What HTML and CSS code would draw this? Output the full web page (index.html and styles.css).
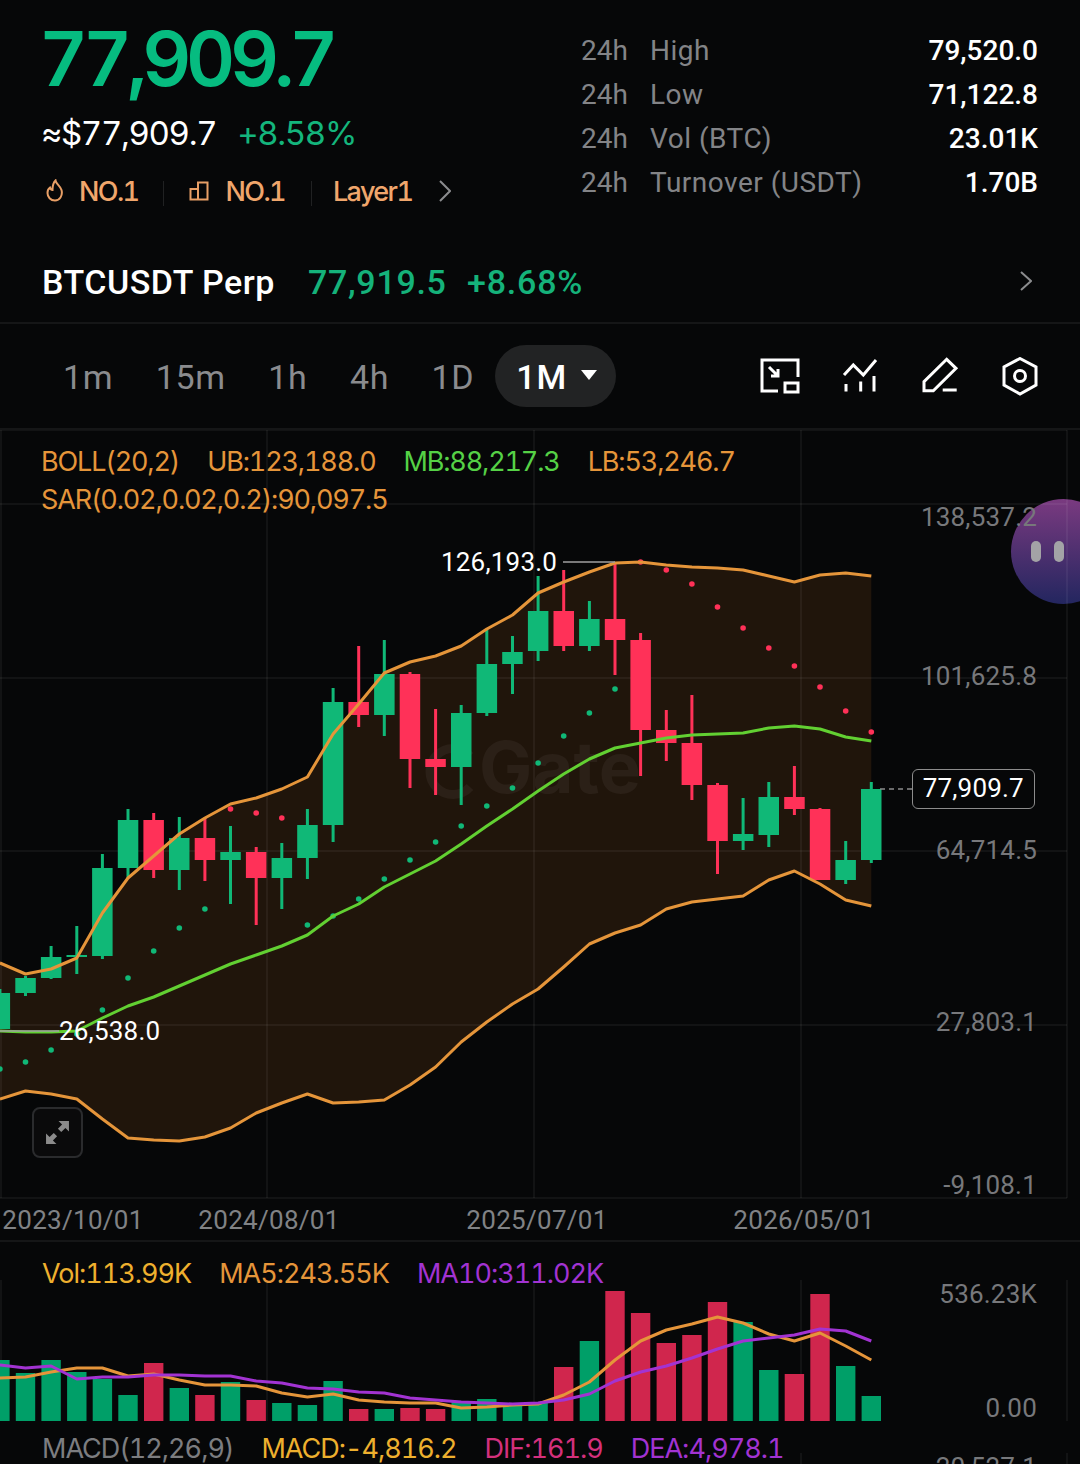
FILE: index.html
```html
<!DOCTYPE html>
<html lang="en">
<head>
    <meta charset="UTF-8">
    <meta name="viewport" content="width=device-width, initial-scale=1.0">
    <title>BTC/USDT</title>
    <link rel="stylesheet" href="styles.css">
</head>
<body>

    <!-- Floating bubble, sits under the chart texts -->
    <div class="bubble"><i></i><i></i></div>

    <!-- Price header -->
    <div class="header">
        <div class="price-block">
            <div class="last-price">77,909.7</div>
            <div class="sub-price">
                <span class="usd">≈$77,909.7</span>
                <span class="pct">+8.58%</span>
            </div>
            <div class="tags">
                <svg class="tag-icon flame" viewBox="0 0 18 24"><path d="M9.5 1.5C10 5 14 6.5 15.5 11C17 17 13.5 21.5 9 21.5C4.5 21.5 1.5 18 1.5 14C1.5 11.5 2.5 9.5 4 8.5C4.5 10 5.5 11 6.5 11C6.5 7.5 7 4 9.5 1.5Z"/></svg>
                <span class="tag tag-first">NO.1</span>
                <svg class="tag-icon bars" viewBox="0 0 20 20"><path d="M1.5 18.5V8H9V18.5ZM9 8V1.5H18.5V18.5H9"/></svg>
                <span class="tag tag-second">NO.1</span>
                <span class="tag tag-layer">Layer1</span>
                <svg class="tag-chevron" viewBox="0 0 12 22"><path d="M1 1L11 11L1 21"/></svg>
            </div>
        </div>
        <div class="stats">
            <div class="stat-row"><span class="stat-h">24h</span><span class="stat-name">High</span><span class="stat-val">79,520.0</span></div>
            <div class="stat-row"><span class="stat-h">24h</span><span class="stat-name">Low</span><span class="stat-val">71,122.8</span></div>
            <div class="stat-row"><span class="stat-h">24h</span><span class="stat-name">Vol (BTC)</span><span class="stat-val">23.01K</span></div>
            <div class="stat-row"><span class="stat-h">24h</span><span class="stat-name">Turnover (USDT)</span><span class="stat-val">1.70B</span></div>
        </div>
    </div>

    <!-- Perp row -->
    <div class="perp-row">
        <span class="perp-name">BTCUSDT Perp</span>
        <span class="perp-price">77,919.5</span>
        <span class="perp-pct">+8.68%</span>
        <svg class="perp-chevron" viewBox="0 0 12 20"><path d="M1 1L11 10L1 19"/></svg>
    </div>

    <!-- Timeframes and tools -->
    <div class="toolbar">
        <div class="tabs">
            <span class="tab">1m</span>
            <span class="tab">15m</span>
            <span class="tab">1h</span>
            <span class="tab">4h</span>
            <span class="tab">1D</span>
            <span class="tab-active">1M<i class="caret"></i></span>
        </div>
        <div class="tools">
            <svg viewBox="0 0 40 40"><path d="M38 20V3H2V34H18"/><rect x="25" y="26" width="13" height="9"/><path d="M9 10L18 19M18 12V19H11"/></svg>
            <svg viewBox="0 0 40 40"><path d="M4 18L13.3 8L23.3 18L36 3M6 27V34.5M20.7 24.5V34.5M34 19V34.5"/></svg>
            <svg viewBox="0 0 40 40"><path d="M4 33.7V24.7L26.7 2.3L36 11.3L13.3 33.7ZM22.7 33H36.7"/></svg>
            <svg viewBox="0 0 40 40"><path d="M20 1.5L36 10V28L20 37L4 28V10Z"/><circle cx="20" cy="19" r="5.5"/></svg>
        </div>
    </div>

    <!-- Main chart -->
    <div class="chart">
        <svg id="main-chart" class="plot" viewBox="0 429 1080 812"></svg>
        <div class="legend legend-boll">
            <div class="legend-line">
                <span class="c-orange">BOLL(20,2)</span>
                <span class="c-orange">UB:123,188.0</span>
                <span class="c-green">MB:88,217.3</span>
                <span class="c-orange">LB:53,246.7</span>
            </div>
            <div class="legend-line"><span class="c-orange">SAR(0.02,0.02,0.2):90,097.5</span></div>
        </div>
        <div class="last-tag">77,909.7</div>
        <div class="expand-btn">
            <svg viewBox="0 0 24 24"><path d="M13 1H23V11L19.6 7.6L15.6 11.6L12.4 8.4L16.4 4.4ZM11 23H1V13L4.4 16.4L8.4 12.4L11.6 15.6L7.6 19.6Z"/></svg>
        </div>
    </div>

    <!-- Volume and MACD -->
    <div class="lower">
        <svg id="vol-chart" class="plot" viewBox="0 1242 1080 222"></svg>
        <div class="legend legend-vol">
            <div class="legend-line">
                <span class="c-yellow">Vol:113.99K</span>
                <span class="c-orange">MA5:243.55K</span>
                <span class="c-purple">MA10:311.02K</span>
            </div>
        </div>
        <div class="legend legend-macd">
            <div class="legend-line">
                <span class="c-gray">MACD(12,26,9)</span>
                <span class="c-yellow">MACD:-4,816.2</span>
                <span class="c-pink">DIF:161.9</span>
                <span class="c-purple">DEA:4,978.1</span>
            </div>
        </div>
    </div>

    <script src="chart.js"></script>
</body>
</html>
```

FILE: styles.css
```css
* {
    box-sizing: border-box;
}
html, body {
    margin: 0;
    padding: 0;
}
body {
    position: relative;
    width: 1080px;
    height: 1464px;
    overflow: hidden;
    background: #060708;
    color: #fff;
    font-family: Roboto, "Liberation Sans", sans-serif;
}

/* header */
.header {
    display: flex;
    justify-content: space-between;
    height: 240px;
    padding: 0 42px 0 43px;
}
.last-price {
    height: 115px;
    margin-left: -4px;
    line-height: 116px;
    font-family: Inter, sans-serif;
    font-variant-numeric: tabular-nums;
    font-weight: 600;
    font-size: 76px;
    letter-spacing: -5.2px;
    color: #06bc80;
}
.sub-price {
    display: flex;
    gap: 21px;
    height: 36px;
    margin-left: -2px;
    line-height: 36px;
    font-family: Inter, sans-serif;
    font-variant-numeric: tabular-nums;
    font-size: 33px;
    letter-spacing: -1.35px;
}
.pct {
    color: #14b57c;
}
.tags {
    display: flex;
    align-items: center;
    height: 38px;
    margin-top: 21px;
    color: #f0a66c;
    font-family: Inter, sans-serif;
    font-variant-numeric: tabular-nums;
    font-weight: 500;
    font-size: 27px;
    letter-spacing: -1.6px;
}
.tag-icon {
    fill: none;
    stroke: #e89f66;
    stroke-width: 2;
}
.flame {
    width: 18px;
    height: 24px;
    margin-left: 3px;
}
.bars {
    width: 20px;
    height: 20px;
}
.tag {
    position: relative;
}
.tag-first {
    margin: 0 51px 0 15px;
}
.tag-second {
    margin: 0 48px 0 16px;
}
.tag-first::after, .tag-second::after {
    content: "";
    position: absolute;
    top: 6px;
    width: 1px;
    height: 25px;
    background: #202122;
}
.tag-first::after {
    right: -26px;
}
.tag-second::after {
    right: -27px;
}
.tag-chevron {
    width: 12px;
    height: 22px;
    margin-left: 27px;
    fill: none;
    stroke: #8b8c8e;
    stroke-width: 2;
}
.stats {
    width: 457px;
    padding-top: 29px;
    font-size: 28px;
}
.stat-row {
    display: flex;
    height: 44px;
    line-height: 44px;
}
.stat-h {
    width: 69px;
    color: #838487;
}
.stat-name {
    flex: 1;
    color: #838487;
    letter-spacing: 0.5px;
}
.stat-val {
    font-weight: 500;
}

/* perp row */
.perp-row {
    display: flex;
    align-items: center;
    height: 84px;
    padding: 2px 48px 0 42px;
    border-bottom: 2px solid #151617;
    font-size: 34px;
    font-weight: 500;
    letter-spacing: 0.5px;
}
.perp-name {
    width: 266px;
}
.perp-price {
    width: 159px;
    letter-spacing: 0.7px;
    color: #15b27a;
}
.perp-pct {
    flex: 1;
    letter-spacing: 0.8px;
    color: #15b27a;
}
.perp-chevron {
    width: 12px;
    height: 20px;
    margin-top: -3px;
    fill: none;
    stroke: #8b8c8e;
    stroke-width: 2;
}

/* toolbar */
.toolbar {
    display: flex;
    justify-content: space-between;
    align-items: center;
    height: 106px;
    padding: 0 40px 0 63px;
    border-bottom: 2px solid #151617;
}
.tabs {
    display: flex;
    align-items: center;
    gap: 42.4px;
    font-size: 34px;
    letter-spacing: 0.7px;
    color: #8a8b8e;
}
.tab {
    padding-top: 2px;
}
.tab-active {
    display: flex;
    align-items: center;
    width: 121px;
    height: 62px;
    margin-left: -21.4px;
    padding: 2px 0 0 21px;
    border-radius: 31px;
    background: #222324;
    color: #fff;
    font-weight: 500;
}
.caret {
    width: 0;
    height: 0;
    margin: 0 0 4px 14px;
    border-left: 8px solid transparent;
    border-right: 8px solid transparent;
    border-top: 10px solid #fff;
}
.tools {
    display: flex;
    gap: 40px;
    margin-top: 2px;
}
.tools svg {
    width: 40px;
    height: 40px;
    fill: none;
    stroke: #fff;
    stroke-width: 3;
}

/* charts */
.chart {
    position: relative;
    height: 812px;
    border-bottom: 2px solid #151617;
}
.lower {
    position: relative;
    height: 222px;
}
.plot {
    position: absolute;
    top: 0;
    left: 0;
    width: 1080px;
}
.chart .plot {
    height: 812px;
}
.lower .plot {
    height: 222px;
}
.grid {
    stroke: rgba(255, 255, 255, 0.07);
    stroke-width: 1.5;
}
.axis-label {
    font-family: Roboto, sans-serif;
    font-size: 26px;
    fill: #77787b;
    letter-spacing: 0.2px;
}
.date-label {
    font-family: Roboto, sans-serif;
    font-size: 26px;
    fill: #808285;
    letter-spacing: 0.3px;
    text-anchor: middle;
}
.extreme-label {
    font-family: Roboto, sans-serif;
    font-size: 26px;
    fill: #fff;
    letter-spacing: 0.2px;
}
.extreme-line {
    stroke: #a0a0a0;
    stroke-width: 1.5;
}
.watermark {
    font-family: Inter, sans-serif;
    font-weight: 700;
    font-size: 71px;
    fill: #2b2017;
}
.legend {
    position: absolute;
    left: 41px;
    font-family: Inter, sans-serif;
    font-variant-numeric: tabular-nums;
    font-size: 27px;
    letter-spacing: -1.15px;
}
.legend-boll {
    top: 13px;
}
.legend-vol {
    top: 13px;
    left: 42px;
    letter-spacing: -1px;
}
.legend-macd {
    top: 188px;
    left: 42px;
    letter-spacing: -1px;
}
.legend-line {
    display: flex;
    gap: 28px;
    height: 38px;
    line-height: 38px;
    white-space: nowrap;
}
.c-orange {
    color: #e5953a;
}
.c-green {
    color: #55d146;
}
.c-yellow {
    color: #eeb02e;
}
.c-purple {
    color: #a233d2;
}
.c-pink {
    color: #d3307c;
}
.c-gray {
    color: #7c7d80;
}
.last-tag {
    position: absolute;
    top: 338.5px;
    left: 912px;
    width: 122.5px;
    height: 40px;
    border: 1.5px solid #8c8c8c;
    border-radius: 6px;
    background: #060708;
    text-align: center;
    line-height: 37px;
    font-size: 26px;
    letter-spacing: 0.2px;
}
.expand-btn {
    display: flex;
    justify-content: center;
    align-items: center;
    position: absolute;
    top: 677px;
    left: 32px;
    width: 51px;
    height: 51px;
    border: 2px solid #2a2b2d;
    border-radius: 8px;
    background: #0a0a0b;
}
.expand-btn svg {
    width: 25px;
    height: 25px;
    fill: #8b8b8b;
}
.bubble {
    position: absolute;
    top: 499px;
    left: 1011px;
    width: 105px;
    height: 105px;
    display: flex;
    align-items: center;
    gap: 13px;
    padding-left: 20px;
    border-radius: 50%;
    background: linear-gradient(#7a3a80, #23265f);
}
.bubble i {
    width: 10px;
    height: 21px;
    border-radius: 5px;
    background: #a3a3a6;
}
```

FILE: chart.js
```js
// all y values are page pixels, the svg viewBox keeps them as they are
const count = 35;
const step = 25.63;
const lastX = 871.3;
const xAt = i => lastX - step * (count - 1 - i);

// wick top, body top, body bottom, wick bottom, colour
const candles = [
    [988, 992, 1028, 1028, 'g'], [975, 977, 992, 995, 'g'], [945, 956, 977, 978, 'g'],
    [925, 954, 956, 973, 'g'], [853, 867, 955, 958, 'g'], [808, 819, 867, 877, 'g'],
    [812, 819, 869, 877, 'r'], [816, 837, 869, 889, 'g'], [817, 837, 859, 880, 'r'],
    [825, 851, 859, 903, 'g'], [846, 851, 877, 924, 'r'], [842, 857, 877, 908, 'g'],
    [808, 824, 857, 878, 'g'], [687, 701, 824, 841, 'g'], [645, 701, 714, 726, 'r'],
    [639, 673, 714, 735, 'g'], [671, 673, 758, 787, 'r'], [708, 758, 766, 794, 'r'],
    [704, 712, 766, 804, 'g'], [628, 663, 712, 715, 'g'], [635, 651, 663, 693, 'g'],
    [575, 610, 650, 660, 'g'], [569, 610, 645, 650, 'r'], [600, 618, 645, 650, 'g'],
    [561, 618, 639, 674, 'r'], [632, 639, 729, 775, 'r'], [709, 729, 742, 760, 'r'],
    [694, 742, 784, 799, 'r'], [782, 784, 840, 873, 'r'], [797, 833, 840, 849, 'g'],
    [781, 796, 834, 846, 'g'], [765, 796, 808, 814, 'r'], [807, 808, 879, 879, 'r'],
    [840, 859, 879, 883, 'g'], [781, 788, 859, 862, 'g']
];
const upper = [962, 973, 968, 957, 912, 877, 855, 833, 817, 803, 797, 788, 776, 733, 703, 672, 661, 655, 645, 628, 614, 592, 581, 571, 562, 561, 564, 566, 567, 569, 575, 581, 574, 572, 575];
const mid = [1030, 1031, 1031, 1030, 1017, 1005, 996, 985, 974, 963, 954, 945, 934, 915, 903, 886, 873, 860, 843, 825, 808, 790, 773, 758, 747, 742, 737, 734, 733, 732, 727, 725, 728, 736, 740];
const lower = [1098, 1090, 1093, 1098, 1118, 1137, 1139, 1140, 1136, 1127, 1112, 1102, 1093, 1102, 1101, 1099, 1084, 1066, 1041, 1021, 1003, 988, 966, 943, 932, 924, 908, 901, 898, 895, 879, 870, 883, 899, 905];
const sar = [1068, 1061, 1049, 1033, 1009, 977, 950, 927, 908, 808, 812, 817, 924, 915, 898, 878, 859, 841, 825, 805, 787, 762, 735, 712, 688, 561, 569, 583, 606, 627, 647, 665, 686, 710, 731];
const sarRed = [9, 10, 11, 25, 26, 27, 28, 29, 30, 31, 32, 33, 34];
const volTops = [1360, 1373, 1360, 1372, 1379, 1395, 1363, 1388, 1395, 1382, 1400, 1403, 1405, 1381, 1409, 1409, 1408, 1409, 1402, 1399, 1406, 1403, 1367, 1341, 1291, 1313, 1343, 1335, 1302, 1322, 1370, 1374, 1294, 1366, 1396];
const ma5 = [1378, 1377, 1372, 1368, 1368, 1376, 1374, 1380, 1385, 1385, 1386, 1393, 1397, 1394, 1400, 1402, 1403, 1403, 1408, 1407, 1405, 1404, 1395, 1382, 1360, 1341, 1330, 1324, 1317, 1323, 1334, 1341, 1333, 1346, 1360];
const ma10 = [1365, 1368, 1366, 1379, 1377, 1377, 1375, 1375, 1376, 1376, 1381, 1383, 1388, 1389, 1392, 1393, 1398, 1400, 1402, 1403, 1404, 1403, 1400, 1394, 1381, 1372, 1366, 1358, 1349, 1341, 1338, 1335, 1329, 1331, 1341];

const pts = ys => ys.map((y, i) => xAt(i).toFixed(1) + ',' + y).join(' ');
const line = (x1, y1, x2, y2, cls) => `<line x1="${x1}" y1="${y1}" x2="${x2}" y2="${y2}" class="${cls}"/>`;
const poly = (ys, color, w) => `<polyline points="${pts(ys)}" fill="none" stroke="${color}" stroke-width="${w}" stroke-linejoin="round"/>`;
const text = (x, y, str, cls, extra = '') => `<text x="${x}" y="${y}" class="${cls}" ${extra}>${str}</text>`;

function drawMain() {
    let s = '';
    // band
    const back = lower.map((y, i) => xAt(i).toFixed(1) + ',' + y).reverse().join(' ');
    s += `<polygon points="0,${upper[0]} ${pts(upper)} ${back} 0,${lower[0]}" fill="#20150b"/>`;

    // grid
    [429, 503, 677, 850, 1024, 1197].forEach(y => { s += line(0, y, 1067, y, 'grid'); });
    [1, 267, 534, 801, 1067].forEach(x => { s += line(x, 429, x, 1197, 'grid'); });

    // watermark
    s += `<path d="M470 755A23 23 0 1 0 470 786" fill="none" stroke="#2b2017" stroke-width="9"/>`;
    s += text(479, 792, 'Gate', 'watermark');

    // candles
    candles.forEach((c, i) => {
        const color = c[4] === 'g' ? '#10b877' : '#ff3158';
        const x = xAt(i);
        s += `<rect x="${(x - 1.5).toFixed(1)}" y="${c[0]}" width="3" height="${c[3] - c[0]}" fill="${color}"/>`;
        s += `<rect x="${(x - 10.25).toFixed(1)}" y="${c[1]}" width="20.5" height="${c[2] - c[1]}" fill="${color}"/>`;
    });

    // sar
    sar.forEach((y, i) => {
        const color = sarRed.includes(i) ? '#ff3158' : '#10b877';
        s += `<circle cx="${xAt(i).toFixed(1)}" cy="${y}" r="2.8" fill="${color}"/>`;
    });

    s += poly(upper, '#e5953a', 3) + poly(mid, '#62d032', 3) + poly(lower, '#e5953a', 3);

    // high and low marks
    s += line(563, 561, 615, 561, 'extreme-line');
    s += text(441, 570, '126,193.0', 'extreme-label');
    s += line(0, 1030, 59, 1030, 'extreme-line');
    s += text(59, 1039, '26,538.0', 'extreme-label');

    // dashes to the last price box
    s += `<line x1="880" y1="788" x2="913" y2="788" stroke="#8c8c8c" stroke-width="1.5" stroke-dasharray="5 4"/>`;

    // price axis
    [[517, '138,537.2'], [676, '101,625.8'], [850, '64,714.5'], [1022, '27,803.1'], [1185, '-9,108.1']].forEach(a => {
        s += text(1037, a[0] + 8, a[1], 'axis-label', 'text-anchor="end"');
    });

    // dates
    [[73, '2023/10/01'], [269, '2024/08/01'], [537, '2025/07/01'], [804, '2026/05/01']].forEach(d => {
        s += text(d[0], 1228, d[1], 'date-label');
    });

    document.getElementById('main-chart').innerHTML = s;
}

function drawVol() {
    let s = '';
    [1, 267, 534, 801, 1067].forEach(x => {
        s += line(x, 1280, x, 1421, 'grid');
        if (x > 700) s += line(x, 1453, x, 1464, 'grid');
    });
    volTops.forEach((y, i) => {
        const color = candles[i][4] === 'g' ? '#009f68' : '#d0264d';
        s += `<rect x="${(xAt(i) - 9.7).toFixed(1)}" y="${y}" width="19.4" height="${1421 - y}" fill="${color}"/>`;
    });
    s += poly(ma5, '#e5953a', 3) + poly(ma10, '#a233d2', 3);
    s += text(1037, 1303, '536.23K', 'axis-label', 'text-anchor="end"');
    s += text(1037, 1417, '0.00', 'axis-label', 'text-anchor="end"');
    s += text(1037, 1476, '20,527.1', 'axis-label', 'text-anchor="end"');
    document.getElementById('vol-chart').innerHTML = s;
}

drawMain();
drawVol();
```
